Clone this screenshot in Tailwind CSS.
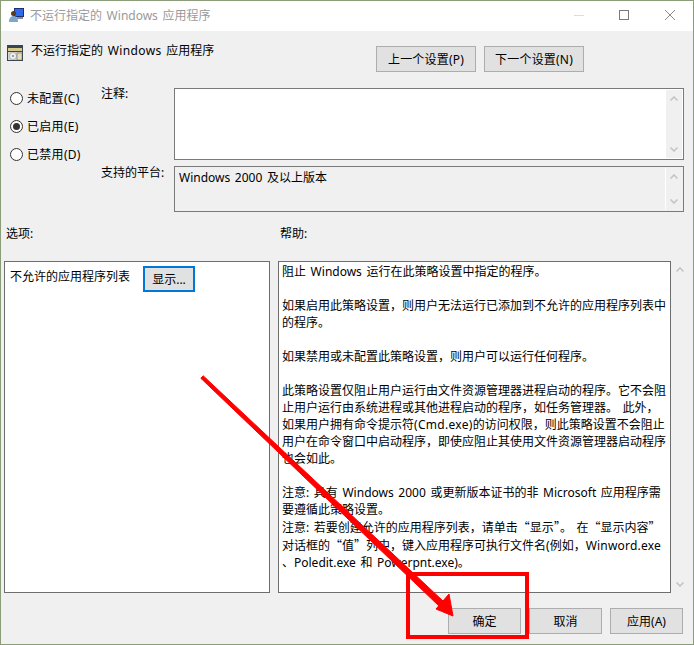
<!DOCTYPE html>
<html lang="zh">
<head>
<meta charset="utf-8">
<script src="https://cdn.jsdelivr.net/npm/@tailwindcss/browser@4"></script>
</head>
<body class="m-0 bg-[#8b9c78]">
<div class="relative h-[645px] w-[694px] overflow-hidden border border-[#8b9c78] bg-[#f0f0f0] font-['Noto_Sans','Noto_Sans_CJK_SC',sans-serif] text-[12px] leading-[17px] text-black [word-spacing:1.5px]">
  <!-- title bar -->
  <header class="flex h-[30px] items-center bg-white pb-[2px] pl-[8px] text-[#9a9a9a]">
    <svg class="h-4 w-4" viewBox="0 0 16 16"><rect x="5" y="1" width="10" height="9" fill="#1c2f73"/><rect x="6" y="2" width="8" height="7" fill="#2f6be8"/><rect x="8" y="10" width="6" height="2" fill="#8c8c8c"/><circle cx="4.5" cy="6.5" r="2.5" fill="#5b3a1e"/><path d="M0 15c0-4 2-6 4.500-6s4.500 2 4.500 6z" fill="#7fa6c9"/></svg>
    <span class="ml-[5px]">不运行指定的 Windows 应用程序</span>
    <div class="ml-auto flex items-center">
      <span class="mr-[35px] h-px w-[10px] bg-[#dcdcdc]"></span>
      <span class="mr-[36px] h-[10px] w-[10px] border border-[#7a7a7a]"></span>
      <svg class="mr-[18px] h-[10px] w-[10px]" viewBox="0 0 10 10" fill="none" stroke="#8a8a8a" stroke-width="1"><path d="M0 0l10 10M10 0l-10 10"/></svg>
    </div>
  </header>

  <!-- heading row -->
  <div class="flex h-[57px] items-start pl-[6px] pt-[13px]">
    <svg class="mt-[1px] h-4 w-4" viewBox="0 0 16 16"><rect width="16" height="16" fill="#37474f"/><rect x="1" y="3" width="14" height="3" fill="#d7c98a"/><rect x="1" y="7" width="14" height="8" fill="#cfd8d4"/><circle cx="6" cy="11" r="3.500" fill="#f2eef0" stroke="#8a8a8a" stroke-width=".5"/><circle cx="6" cy="11" r="1" fill="#6e8f8a"/><rect x="10" y="8" width="5" height="7" fill="#e9dfae" stroke="#556" stroke-width=".5"/></svg>
    <h1 class="ml-[8px] -mt-[2px] font-normal">不运行指定的 <span class="tracking-[0.4px]">Windows</span> 应用程序</h1>
    <div class="ml-auto mr-[109px] mt-[2px] flex gap-2">
      <button class="h-[26px] w-[100px] border border-[#adadad] bg-[#e1e1e1] tracking-[0.2px]">上一个设置(P)</button>
      <button class="h-[26px] w-[100px] border border-[#adadad] bg-[#e1e1e1] tracking-[0.2px]">下一个设置(N)</button>
    </div>
  </div>

  <!-- state + comment/platform -->
  <div class="flex h-[125px] pl-[9px]">
    <div class="flex w-[91px] flex-col gap-[11px] pt-[2px]">
      <label class="flex h-[17px] items-center gap-[4px] whitespace-nowrap tracking-[0.3px]"><span class="h-[13px] w-[13px] rounded-full border border-[#333] bg-white"></span>未配置(C)</label>
      <label class="flex h-[17px] items-center gap-[4px] whitespace-nowrap tracking-[0.3px]"><span class="flex h-[13px] w-[13px] items-center justify-center rounded-full border border-[#333] bg-white"><span class="h-[7px] w-[7px] rounded-full bg-[#333]"></span></span>已启用(E)</label>
      <label class="flex h-[17px] items-center gap-[4px] whitespace-nowrap tracking-[0.3px]"><span class="h-[13px] w-[13px] rounded-full border border-[#333] bg-white"></span>已禁用(D)</label>
    </div>
    <div class="flex flex-1 flex-col gap-[6px] pr-[9px]">
      <div class="flex h-[72px]">
        <span class="w-[73px] -mt-[1px] leading-[13px]">注释:</span>
        <div class="flex flex-1 justify-end border border-[#7a7a7a] bg-white p-px">
          <div class="flex w-[16px] flex-col items-center justify-between bg-[#f0f0f0] py-[6px]">
            <svg class="h-[5px] w-[8px]" viewBox="0 0 8 5" fill="none" stroke="#c2c2c2" stroke-width="1.500"><path d="M.5 4.500l3.500-3.500 3.500 3.500"/></svg>
            <svg class="h-[5px] w-[8px]" viewBox="0 0 8 5" fill="none" stroke="#c2c2c2" stroke-width="1.500"><path d="M.5.500l3.500 3.500 3.500-3.500"/></svg>
          </div>
        </div>
      </div>
      <div class="flex h-[46px]">
        <span class="w-[73px] leading-[13px]">支持的平台:</span>
        <div class="flex flex-1 justify-between border border-[#7a7a7a] py-px pl-[4px] pr-px">
          <span class="pt-[1px]">Windows 2000 及以上版本</span>
          <div class="flex w-[17px] flex-col items-center justify-between border-l border-white py-[6px]">
            <svg class="h-[5px] w-[8px]" viewBox="0 0 8 5" fill="none" stroke="#c2c2c2" stroke-width="1.500"><path d="M.5 4.500l3.500-3.500 3.500 3.500"/></svg>
            <svg class="h-[5px] w-[8px]" viewBox="0 0 8 5" fill="none" stroke="#c2c2c2" stroke-width="1.500"><path d="M.5.500l3.500 3.500 3.500-3.500"/></svg>
          </div>
        </div>
      </div>
    </div>
  </div>

  <!-- labels -->
  <div class="flex h-[48px] pl-[5px] pt-[12px]">
    <span class="w-[274px]">选项:</span>
    <span>帮助:</span>
  </div>

  <!-- panes -->
  <div class="flex h-[332px] pl-[3px]">
    <section class="flex h-full w-[266px] items-start border border-[#6e6e6e] bg-white pl-[5px] pt-[4px]">
      <span class="pt-[2px]">不允许的应用程序列表</span>
      <button class="ml-[13px] h-[26px] w-[52px] border-2 border-[#0078d7] bg-[#e1e1e1]">显示...</button>
    </section>
    <section class="ml-[8px] h-full w-[393px] whitespace-nowrap border border-[#6e6e6e] bg-white pl-[3px] pt-px">
      <p>阻止 Windows 运行在此策略设置中指定的程序。</p>
      <p class="mt-[17px]">如果启用此策略设置，则用户无法运行已添加到不允许的应用程序列表中<br>的程序。</p>
      <p class="mt-[17px]">如果禁用或未配置此策略设置，则用户可以运行任何程序。</p>
      <p class="mt-[17px]">此策略设置仅阻止用户运行由文件资源管理器进程启动的程序。它不会阻<br>止用户运行由系统进程或其他进程启动的程序，如任务管理器。 此外，<br>如果用户拥有命令提示符<span class="tracking-[0.3px]">(Cmd.exe)</span>的访问权限，则此策略设置不会阻止<br>用户在命令窗口中启动程序，即使应阻止其使用文件资源管理器启动程序<br>也会如此。</p>
      <p class="mt-[17px]">注意: 具有 Windows 2000 或更新版本证书的非 Microsoft 应用程序需<br>要遵循此策略设置。<br>注意: 若要创建允许的应用程序列表，请单击<span class="font-['Noto_Sans_CJK_SC']">“</span>显示<span class="font-['Noto_Sans_CJK_SC']">”</span>。 在<span class="font-['Noto_Sans_CJK_SC']">“</span>显示内容<span class="font-['Noto_Sans_CJK_SC']">”</span><br>对话框的<span class="font-['Noto_Sans_CJK_SC']">“</span>值<span class="font-['Noto_Sans_CJK_SC']">”</span>列中，键入应用程序可执行文件名(例如，<span class="tracking-[0.2px]">Winword.exe</span><br>、Poledit.exe 和 Powerpnt.exe)。</p>
    </section>
    <div class="flex w-[17px] flex-col items-center justify-between py-[6px]">
      <svg class="h-[5px] w-[8px]" viewBox="0 0 8 5" fill="none" stroke="#c2c2c2" stroke-width="1.500"><path d="M.5 4.500l3.500-3.500 3.500 3.500"/></svg>
      <svg class="h-[5px] w-[8px]" viewBox="0 0 8 5" fill="none" stroke="#c2c2c2" stroke-width="1.500"><path d="M.5.500l3.500 3.500 3.500-3.500"/></svg>
    </div>
  </div>

  <!-- footer buttons -->
  <footer class="flex justify-end gap-2 pr-[10px] pt-[15px]">
    <button class="h-[26px] w-[73px] border border-[#adadad] bg-[#e1e1e1]">确定</button>
    <button class="h-[26px] w-[73px] border border-[#adadad] bg-[#e1e1e1]">取消</button>
    <button class="h-[26px] w-[73px] border border-[#adadad] bg-[#e1e1e1]">应用(A)</button>
  </footer>

  <!-- red annotation overlay -->
  <svg class="pointer-events-none absolute -left-px -top-px h-[645px] w-[694px]" viewBox="0 0 694 645" fill="none">
    <path d="M200.800 378.200L203.200 375.800 443 601 439 606z" fill="#ff0000" stroke="#ff0000" stroke-width="1" stroke-linejoin="round"/>
    <path d="M453 616L436 609 449 594z" fill="#ff0000" stroke="#ff0000" stroke-width="1"/>
    <rect x="408" y="574" width="119" height="63" stroke="#ff0000" stroke-width="4"/>
  </svg>
</div>
</body>
</html>
